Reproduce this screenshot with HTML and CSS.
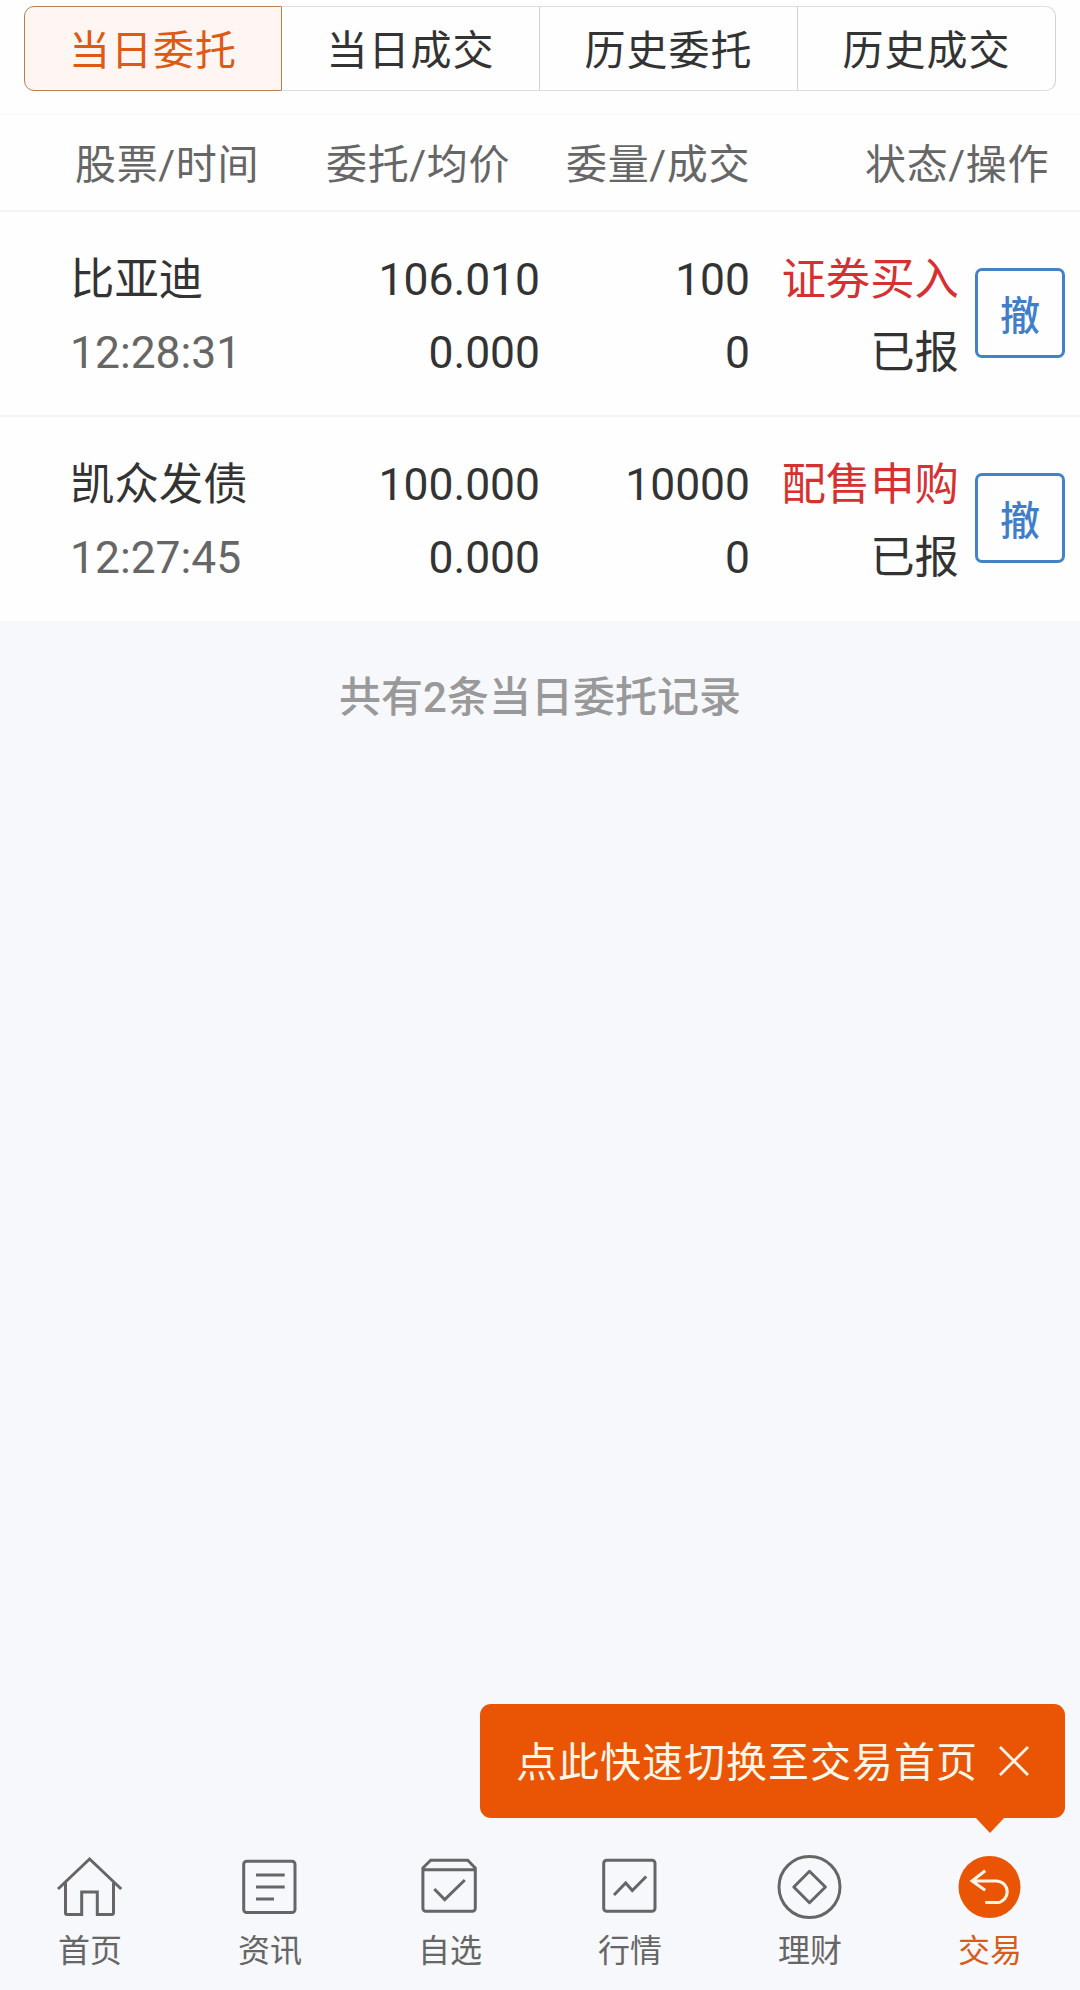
FILE: index.html
```html
<!DOCTYPE html>
<html lang="zh-CN">
<head>
  <meta charset="UTF-8" />
  <meta name="viewport" content="width=device-width, initial-scale=1.0"/>
  <title>当日委托</title>
  <link rel="stylesheet" href="styles.css">
</head>
<body>
  <div class="top">
    <div class="tabs">
      <a class="tab active">当日委托</a>
      <a class="tab">当日成交</a>
      <a class="tab">历史委托</a>
      <a class="tab">历史成交</a>
    </div>
  </div>

  <div class="list-head">
    <span>股票/时间</span>
    <span>委托/均价</span>
    <span>委量/成交</span>
    <span>状态/操作</span>
  </div>

  <div class="order">
    <div class="col stock">
      <span>比亚迪</span>
      <span class="time">12:28:31</span>
    </div>
    <div class="col"><span>106.010</span><span>0.000</span></div>
    <div class="col"><span>100</span><span>0</span></div>
    <div class="col"><span class="red">证券买入</span><span>已报</span></div>
    <button class="cancel">撤</button>
  </div>

  <div class="order">
    <div class="col stock">
      <span>凯众发债</span>
      <span class="time">12:27:45</span>
    </div>
    <div class="col"><span>100.000</span><span>0.000</span></div>
    <div class="col"><span>10000</span><span>0</span></div>
    <div class="col"><span class="red">配售申购</span><span>已报</span></div>
    <button class="cancel">撤</button>
  </div>

  <p class="total">共有2条当日委托记录</p>

  <footer>
    <div class="tip">
      <span>点此快速切换至交易首页</span>
      <svg class="close" viewBox="0 0 30 30"><path d="M1 1L29 29M29 1L1 29"/></svg>
    </div>
    <nav>
      <a>
        <svg class="icon" viewBox="0 0 68 68">
          <path d="M2 34L33.6 4L65.2 34"/>
          <path d="M9.5 27.5V58a1.5 1.5 0 0 0 1.5 1.5H25.7V37H41.3V59.5H56a1.5 1.5 0 0 0 1.5-1.5V27.5"/>
        </svg>
        <span>首页</span>
      </a>
      <a>
        <svg class="icon" viewBox="0 0 68 68">
          <rect x="7.7" y="6.3" width="51.3" height="51.3" rx="3"/>
          <path d="M20 20H48.7M20 32H48.7M20 44H38"/>
        </svg>
        <span>资讯</span>
      </a>
      <a>
        <svg class="icon" viewBox="0 0 68 68">
          <path d="M6.9 13L14.7 5.2H51.7L59.3 13V53.3a3 3 0 0 1-3 3H9.9a3 3 0 0 1-3-3ZM6.9 14.7H59.3"/>
          <path d="M18.3 34L28.7 44.6L48.8 25"/>
        </svg>
        <span>自选</span>
      </a>
      <a>
        <svg class="icon" viewBox="0 0 68 68">
          <rect x="7.7" y="5.3" width="51.3" height="51" rx="3"/>
          <path d="M18 40L29.7 28L36.3 35.5L50.2 21.5"/>
        </svg>
        <span>行情</span>
      </a>
      <a>
        <svg class="icon" viewBox="0 0 68 68">
          <circle cx="33.5" cy="32" r="30.5"/>
          <path class="round" d="M33.5 16.3L49.4 32L33.5 47.7L17.8 32Z"/>
        </svg>
        <span>理财</span>
      </a>
      <a class="on">
        <svg class="icon" viewBox="0 0 68 68">
          <circle class="disc" cx="33.5" cy="32" r="31"/>
          <path d="M29.2 15.8L16 26L29.2 35.3M16 26H40.4a10.8 10.8 0 0 1 0 21.6H29.2"/>
        </svg>
        <span>交易</span>
      </a>
    </nav>
  </footer>
</body>
</html>
```

FILE: styles.css
```css
* { box-sizing: border-box; }
body {
  margin: 0;
  min-height: 1990px;
  display: flex;
  flex-direction: column;
  background-color: #f7f8fb;
  color: #333;
  font-family: Roboto, "Noto Sans CJK SC", sans-serif;
}
.top {
  height: 114px;
  padding: 6px 24px 0;
  background-color: #fefefe;
}
.tabs {
  display: flex;
  height: 85px;
}
.tab {
  width: 25%;
  padding-top: 3px;
  border: 1px solid #dcdfdf;
  border-right-color: #cfd3d3;
  border-left: none;
  font-size: 41px;
  letter-spacing: 1px;
  line-height: 83px;
  text-align: center;
}
.tab.active {
  border: 1px solid #b98052;
  border-radius: 10px 0 0 10px;
  background-color: #fff6f3;
  color: #dc5a14;
}
.tab:last-child { border-radius: 0 10px 10px 0; }
.list-head {
  display: grid;
  grid-template-columns: 259px 251px 240px 299px;
  height: 98px;
  padding-top: 2px;
  border-top: 1px solid #f7f7f7;
  border-bottom: 2px solid #f5f5f5;
  background-color: #fefefe;
  color: #666;
  font-size: 41px;
  letter-spacing: 0.6px;
  line-height: 97px;
  text-align: right;
}
.order {
  display: grid;
  grid-template-columns: 300px 240px 210px 209px 90px;
  height: 205px;
  padding-top: 32px;
  border-bottom: 2px solid #f5f5f5;
  background-color: #fefefe;
  font-size: 44.4px;
}
.order + .order { border-bottom: none; height: 204px; }
.col {
  display: flex;
  flex-direction: column;
  text-align: right;
  line-height: 73px;
}
.stock {
  padding-left: 70px;
  text-align: left;
}
.time { color: #666; }
.red { color: #d63030; }
.cancel {
  width: 90px;
  height: 90px;
  margin: 24px 0 0 16px;
  padding: 0;
  border: 3px solid #4482c6;
  border-radius: 7px;
  background: none;
  color: #3f7fca;
  font-family: inherit;
  font-size: 40px;
  font-weight: 500;
}
.total {
  margin: 47px 0 0;
  color: #999;
  font-size: 42px;
  font-weight: 500;
  line-height: 60px;
  text-align: center;
}
footer {
  display: flex;
  flex-direction: column;
  margin-top: auto;
}
.tip {
  position: relative;
  display: flex;
  align-items: center;
  align-self: flex-end;
  width: 585px;
  height: 114px;
  margin-right: 15px;
  padding-left: 36px;
  border-radius: 11px;
  background-color: #e95504;
  color: #fff6ea;
  font-size: 41px;
  letter-spacing: 1px;
}
.tip span { padding-bottom: 5px; }
.tip::after {
  content: "";
  position: absolute;
  top: 113px;
  right: 60px;
  border: 15px solid transparent;
  border-top: 16px solid #e95504;
  border-bottom: none;
}
.close {
  width: 30px;
  height: 30px;
  margin-left: 21px;
  fill: none;
  stroke: #fff6ea;
  stroke-width: 2.8;
}
nav {
  display: flex;
  height: 172px;
  padding-top: 37px;
}
nav a {
  flex: 1;
  display: flex;
  flex-direction: column;
  align-items: center;
  color: #666;
  font-size: 32px;
  line-height: 57px;
}
.icon {
  width: 68px;
  height: 68px;
  fill: none;
  stroke: #666;
  stroke-width: 3;
}
.round { stroke-linejoin: round; }
nav .on { color: #d85c1c; }
.on .icon { stroke: #fff3e6; }
.on .disc {
  fill: #e95504;
  stroke: none;
}
```
